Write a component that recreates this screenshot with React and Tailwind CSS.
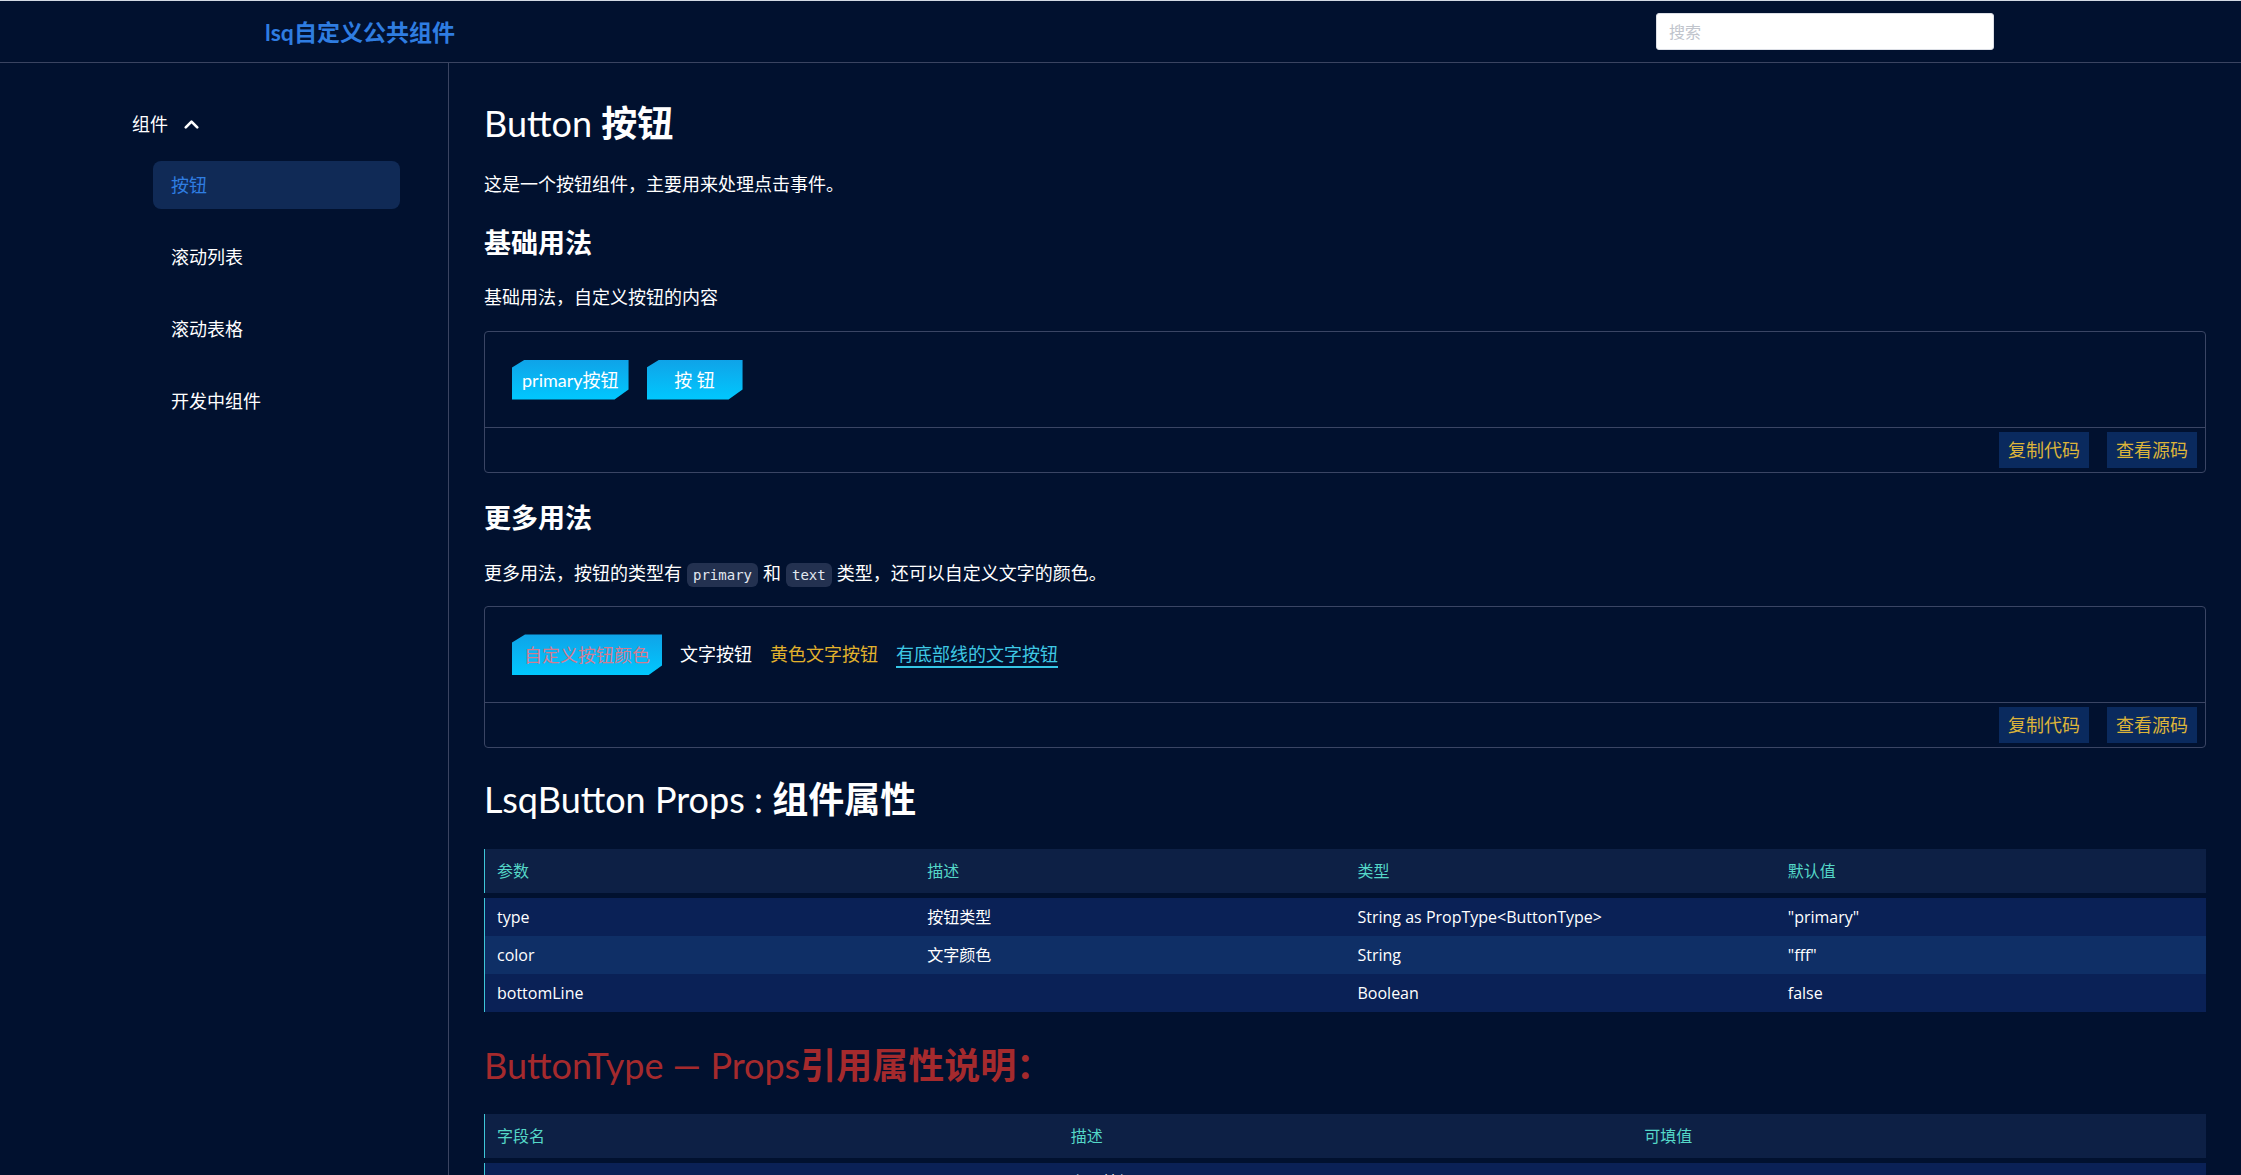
import React from "react";
import { ChevronUp } from "lucide-react";

const clip =
  "[clip-path:polygon(13px_0,100%_0,100%_calc(100%_-_10px),calc(100%_-_14px)_100%,0_100%,0_8px)]";

function CyanButton({ children, className = "" }) {
  return (
    <button
      className={`h-[40px] min-w-[96px] px-[10px] bg-linear-to-b from-[#0fa3e8] to-[#00c8fe] text-[18px] leading-[40px] text-white ${clip} ${className}`}
    >
      {children}
    </button>
  );
}

function DemoBox({ children }) {
  return (
    <div className="rounded-[4px] border border-[#3a4564]">
      <div className="flex items-center h-[95px] pl-[27px]">{children}</div>
      <div className="flex items-center justify-end h-[45px] border-t border-[#3a4564] pr-[8px] gap-[18px]">
        <button className="h-[36px] w-[90px] bg-[#0a2a5e] text-[#dcb43a] text-[18px] leading-[36px]">
          复制代码
        </button>
        <button className="h-[36px] w-[90px] bg-[#0a2a5e] text-[#dcb43a] text-[18px] leading-[36px]">
          查看源码
        </button>
      </div>
    </div>
  );
}

function Code({ children }) {
  return (
    <code className="mx-[5px] inline-block h-[24px] rounded-[6px] bg-[#233150] px-[6px] align-middle font-['DejaVu_Sans_Mono','Liberation_Mono',monospace] text-[14px] leading-[24px] text-[#e2e8f0]">
      {children}
    </code>
  );
}

function PropsTable({ headers, rows, cols }) {
  return (
    <div className="flex flex-col gap-[5px]">
      <div className={`grid ${cols} h-[44px] items-center bg-[#0d2045] border-l border-[#3ec6d8] text-[16px] text-[#55d8c8]`}>
        {headers.map((h) => (
          <div key={h} className="pl-[12px]">
            {h}
          </div>
        ))}
      </div>
      <div className="flex flex-col border-l border-[#3ec6d8]">
        {rows.map((r, i) => (
          <div
            key={i}
            className={`grid ${cols} h-[38px] items-center font-['Open_Sans','Noto_Sans_CJK_SC',sans-serif] text-[16px] text-white ${
              i % 2 === 1 ? "bg-[#0f2f66]" : "bg-[#0a2156]"
            }`}
          >
            {r.map((c, j) => (
              <div key={j} className="pl-[12px]">
                {c}
              </div>
            ))}
          </div>
        ))}
      </div>
    </div>
  );
}

export default function App() {
  return (
    <div className="min-h-screen w-full bg-[#01112f] border-t border-[#d3dae4] font-['Lato','Noto_Sans_CJK_SC',sans-serif] text-white">
      {/* Header */}
      <header className="flex h-[62px] items-center border-b border-[#3a4461]">
        <div className="pl-[265px] text-[23px] font-bold leading-[34px] text-[#2f7de1]">
          lsq自定义公共组件
        </div>
        <div className="flex-1" />
        <input
          placeholder="搜索"
          className="h-[37px] w-[338px] rounded-[3px] border border-[#dcdfe6] bg-white pl-[12px] text-[16px] text-[#333] outline-none placeholder:text-[#c0c4cc]"
        />
        <div className="w-[247px]" />
      </header>

      <div className="flex">
        {/* Sidebar */}
        <aside className="w-[449px] shrink-0 border-r border-[#3a4461] pt-[47px] min-h-[1111px]">
          <div className="flex items-center pl-[132px] h-[28px] text-[18px] leading-[28px]">
            <span>组件</span>
            <ChevronUp className="ml-[12px]" size={23} strokeWidth={2.8} />
          </div>
          <nav className="mt-[23px] flex flex-col gap-[24px] pl-[153px]">
            <div className="flex h-[48px] w-[247px] items-center rounded-[8px] bg-[#102a56] pl-[18px] text-[18px] text-[#2f7de1]">
              按钮
            </div>
            <div className="flex h-[48px] w-[247px] items-center pl-[18px] text-[18px]">
              滚动列表
            </div>
            <div className="flex h-[48px] w-[247px] items-center pl-[18px] text-[18px]">
              滚动表格
            </div>
            <div className="flex h-[48px] w-[247px] items-center pl-[18px] text-[18px]">
              开发中组件
            </div>
          </nav>
        </aside>

        {/* Main */}
        <main className="flex-1 px-[35px] pt-[36px]">
          <h1 className="text-[36px] font-bold leading-[48px]">
            <span className="font-normal">Button </span>按钮
          </h1>
          <p className="mt-[23px] text-[18px] leading-[28px]">
            这是一个按钮组件，主要用来处理点击事件。
          </p>

          <h2 className="mt-[27px] text-[27px] font-bold leading-[36px]">基础用法</h2>
          <p className="mt-[22px] text-[18px] leading-[28px]">基础用法，自定义按钮的内容</p>
          <div className="mt-[20px]">
            <DemoBox>
              <div className="flex items-center gap-[18px]">
                <CyanButton>primary按钮</CyanButton>
                <CyanButton>按 钮</CyanButton>
              </div>
            </DemoBox>
          </div>

          <h2 className="mt-[27px] text-[27px] font-bold leading-[36px]">更多用法</h2>
          <p className="mt-[23px] text-[18px] leading-[28px]">
            更多用法，按钮的类型有<Code>primary</Code>和<Code>text</Code>类型，还可以自定义文字的颜色。
          </p>
          <div className="mt-[19px]">
            <DemoBox>
              <div className="flex items-center gap-[18px] text-[18px]">
                <CyanButton className="h-[41px] px-[12px] !text-[#d27d92]">自定义按钮颜色</CyanButton>
                <span className="text-white">文字按钮</span>
                <span className="text-[#e2b22c]">黄色文字按钮</span>
                <span className="border-b-2 border-[#35c6e6] leading-[24px] text-[#3ec8e4]">
                  有底部线的文字按钮
                </span>
              </div>
            </DemoBox>
          </div>

          <h2 className="mt-[27px] text-[36px] font-bold leading-[48px]">
            <span className="font-normal">LsqButton Props : </span>组件属性
          </h2>
          <div className="mt-[26px]">
            <PropsTable
              cols="grid-cols-4"
              headers={["参数", "描述", "类型", "默认值"]}
              rows={[
                ["type", "按钮类型", "String as PropType<ButtonType>", '"primary"'],
                ["color", "文字颜色", "String", '"fff"'],
                ["bottomLine", "", "Boolean", "false"],
              ]}
            />
          </div>

          <h2 className="mt-[29px] text-[36px] font-bold leading-[48px] text-[#a52a2d]">
            <span className="font-normal">ButtonType — Props</span>引用属性说明：
          </h2>
          <div className="mt-[25px] pb-[40px]">
            <PropsTable
              cols="grid-cols-3"
              headers={["字段名", "描述", "可填值"]}
              rows={[
                ["primary", "主要按钮", '"primary"'],
                ["text", "文字按钮", '"text"'],
              ]}
            />
          </div>
        </main>
      </div>
    </div>
  );
}
